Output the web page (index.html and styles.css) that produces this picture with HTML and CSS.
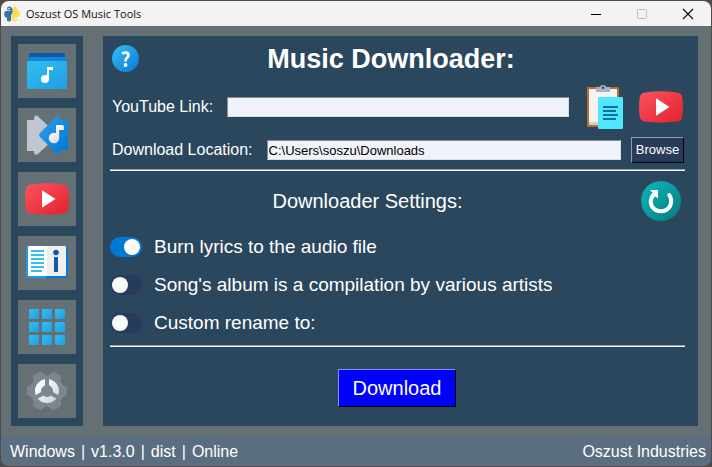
FILE: index.html
```html
<!DOCTYPE html>
<html lang="en">
<head>
<meta charset="utf-8">
<title>Oszust OS Music Tools</title>
<link rel="stylesheet" href="styles.css">
</head>
<body>
<svg class="defs" width="0" height="0" aria-hidden="true">
  <defs>
    <linearGradient id="blue" x1="0" y1="0" x2="1" y2="1"><stop offset="0" stop-color="#36c0f4"/><stop offset="1" stop-color="#0a78d6"/></linearGradient>
    <linearGradient id="sky" x1="0" y1="0" x2="1" y2="1"><stop offset="0" stop-color="#33bef0"/><stop offset="1" stop-color="#1f9fe5"/></linearGradient>
    <linearGradient id="azure" x1="0" y1="0" x2="1" y2="1"><stop offset="0" stop-color="#2f9fe8"/><stop offset="1" stop-color="#0078d8"/></linearGradient>
    <linearGradient id="red" x1="0" y1="0" x2="1" y2="1"><stop offset="0" stop-color="#f9555f"/><stop offset="1" stop-color="#e4202e"/></linearGradient>
    <linearGradient id="teal" x1="0" y1="0" x2="1" y2="1"><stop offset="0" stop-color="#0cb8bc"/><stop offset="1" stop-color="#037b80"/></linearGradient>
    <linearGradient id="silver" x1="0" y1="0" x2="1" y2="1"><stop offset="0" stop-color="#ffffff"/><stop offset="1" stop-color="#d3d6da"/></linearGradient>
    <symbol id="play" viewBox="0 0 44 32">
      <path d="M6 1.5Q22-.8 38 1.5Q43 2 43.3 7Q44.6 16 43.3 25Q43 30 38 30.5Q22 32.8 6 30.5Q1 30 .7 25Q-.6 16 .7 7Q1 2 6 1.5Z" fill="url(#red)"/>
      <path d="M17 7.2V24.8L30.5 16Z" fill="#fff"/>
    </symbol>
  </defs>
</svg>
<div class="window">
  <header class="titlebar">
    <svg class="app-icon" width="16" height="16" viewBox="0 0 16 16" aria-hidden="true">
      <path d="M7.500 1.500C6 .2 4 .4 3.200 1.600V4.200H6.500V5H1.800C.3 5.500 0 7 .2 8.500C.4 10.500 1.200 11.600 3 11.600V14.500C4.500 15.800 6.200 15.600 7 14.500V9.500C7 8.500 7.500 8 8.500 7.500V3Z" fill="#3573a5"/>
      <path d="M8.500 14.500C10 15.800 12 15.600 12.800 14.400V11.800H9.500V11H14.200C15.700 10.500 16 9 15.800 7.500C15.600 5.500 14.800 4.400 13 4.400V1.500C11.500.2 9.800.4 9 1.500V6.500C9 7.500 8.500 8 7.500 8.500V13Z" fill="#ffdc4c"/>
      <circle cx="5" cy="2.600" r=".8" fill="#fff"/><circle cx="11" cy="13.400" r=".8" fill="#fff"/>
    </svg>
    <span class="app-title">Oszust OS Music Tools</span>
    <div class="window-controls">
      <button type="button" aria-label="Minimize"><svg width="12" height="12" viewBox="0 0 12 12"><path d="M1 6.500H11" stroke="#000"/></svg></button>
      <button type="button" aria-label="Maximize" disabled><svg width="12" height="12" viewBox="0 0 12 12"><rect x="1.500" y="1.500" width="9" height="9" rx="1" fill="none" stroke="#bfbfbf"/></svg></button>
      <button type="button" aria-label="Close"><svg width="12" height="12" viewBox="0 0 12 12"><path d="M1 1L11 11M11 1L1 11" stroke="#111" stroke-width="1.200"/></svg></button>
    </div>
  </header>

  <div class="workspace">
    <nav class="sidebar" aria-label="Tools">
      <button type="button" aria-label="Music library">
        <svg width="44" height="40" viewBox="0 0 44 40">
          <rect x="4" y="2" width="36" height="8" rx="1" fill="#105aa5"/>
          <rect x="3" y="6" width="38" height="8" rx="1" fill="#1186dc"/>
          <rect x="2" y="10" width="40" height="28" rx="1" fill="url(#sky)"/>
          <circle cx="20" cy="28" r="4" fill="#fff"/><path d="M22 28V16H28V19H24V28Z" fill="#fff"/>
        </svg>
      </button>
      <button type="button" aria-label="Metadata">
        <svg width="44" height="42" viewBox="0 0 44 42">
          <path d="M2 6H9V4Q10 .5 12 1.500L31 19Q32.500 21 31 23L13 40Q10 42 9 39V37H2Z" fill="#bec7d0"/>
          <path d="M14.500 22.500Q13.500 21 14.500 19.500L31 3Q34 1 35 3.500V6H43V36H35V38Q34 41 31 39Z" fill="url(#azure)"/>
          <circle cx="29" cy="24" r="5.200" fill="url(#silver)"/><path d="M31 24V12Q31 11 32 11H37Q39 11 39 13V16H34.200V24Z" fill="url(#silver)"/>
        </svg>
      </button>
      <button type="button" aria-label="YouTube"><svg width="44" height="32"><use href="#play"/></svg></button>
      <button type="button" aria-label="Information">
        <svg width="42" height="34" viewBox="0 0 42 34">
          <path d="M2 0H21V33H19L18 32H2Q0 32 0 30V2Q0 0 2 0Z" fill="#1a9ce4"/>
          <path d="M21 0H40Q42 0 42 2V30Q42 32 40 32H23L22 33H20V30Z" fill="#0879d4"/>
          <path d="M2 1Q2 0 3 0H21V30H3Q2 30 2 29Z" fill="#fff"/><path d="M21 0H39Q40 0 40 1V29Q40 30 39 30H21Z" fill="#efeff0"/>
          <path d="M5 5H18M5 9H18M5 13H18M5 17H18M5 21H18M5 25H16" stroke="#35bef2" stroke-width="2"/>
          <circle cx="30" cy="6.500" r="2.800" fill="#105aa5"/><path d="M28 11H32V26H28Z" fill="#105aa5"/>
        </svg>
      </button>
      <button type="button" aria-label="Apps">
        <svg width="36" height="36" viewBox="0 0 36 36" fill="url(#sky)">
          <rect width="10" height="10" rx="1"/><rect x="13" width="10" height="10" rx="1"/><rect x="26" width="10" height="10" rx="1"/>
          <rect y="13" width="10" height="10" rx="1"/><rect x="13" y="13" width="10" height="10" rx="1"/><rect x="26" y="13" width="10" height="10" rx="1"/>
          <rect y="26" width="10" height="10" rx="1"/><rect x="13" y="26" width="10" height="10" rx="1"/><rect x="26" y="26" width="10" height="10" rx="1"/>
        </svg>
      </button>
      <button type="button" aria-label="Settings">
        <svg width="40" height="40" viewBox="0 0 40 40">
          <path d="M13 1Q14 .4 15 1.600Q17.500 4.500 20 4.500T25 1.600Q26 .4 27 1Q31 2.500 33.500 4.500Q34.300 5.200 34 6.500Q33 10 34.400 12.300T39 15.500Q40 15.700 40 17V23Q40 24.300 39 24.500Q36 25.300 34.600 27.600T34 33.500Q34.300 34.800 33.500 35.500Q30.500 37.800 27 39Q26 39.600 25 38.400Q22.500 35.500 20 35.500T15 38.400Q14 39.600 13 39Q9.500 37.800 6.500 35.500Q5.700 34.800 6 33.500Q6.800 30 5.400 27.600T1 24.500Q0 24.300 0 23V17Q0 15.700 1 15.500Q4 14.700 5.500 12.300T6 6.500Q5.700 5.200 6.500 4.500Q9.500 2.200 13 1Z" fill="#7c8690"/>
          <circle cx="20" cy="20" r="9" fill="none" stroke="url(#silver)" stroke-width="6"/>
          <g stroke="#7c8690" stroke-width="4"><path d="M20 20V7"/><path d="M20 20L8.700 26.500"/><path d="M20 20L31.300 26.500"/></g>
        </svg>
      </button>
    </nav>

    <main class="panel">
      <div class="heading">
        <button type="button" class="icon-button" aria-label="Help">
          <svg width="27" height="27" viewBox="0 0 27 27"><circle cx="13.500" cy="13.500" r="13.500" fill="url(#blue)"/><path d="M10.200 8.700Q12 7.500 13.700 7.600Q16.500 7.800 16.500 10.100Q16.500 11.500 15 12.700Q13.500 13.800 13.500 16.500" fill="none" stroke="#fff" stroke-width="2.600"/><circle cx="13.500" cy="20" r="1.900" fill="#fff"/></svg>
        </button>
        <h1>Music Downloader:</h1>
      </div>

      <div class="field link-field">
        <label for="link">YouTube Link:</label>
        <input id="link" type="text">
        <button type="button" class="icon-button paste" aria-label="Paste link">
          <svg width="36" height="44" viewBox="0 0 36 44">
            <rect y="2" width="32" height="40" rx="1" fill="#b96b33"/><rect x="2" y="4" width="28" height="36" fill="#f3f3f4"/><path d="M2 37H12V40H2Z" fill="#cfd2d5"/>
            <path d="M9 2H13Q13 0 16 0T19 2H23V7H9Z" fill="#a9b3bd"/><circle cx="16" cy="2.800" r="1.300" fill="#35485a"/>
            <rect x="11" y="12" width="25" height="32" rx="1" fill="#50e6ff"/>
            <path d="M16 22H31M16 26H29M16 30H31M16 34H29" stroke="#087394" stroke-width="2"/>
          </svg>
        </button>
        <button type="button" class="icon-button open-site" aria-label="Open YouTube"><svg width="44" height="32"><use href="#play"/></svg></button>
      </div>

      <div class="field location-field">
        <label for="location">Download Location:</label>
        <input id="location" type="text" value="C:\Users\soszu\Downloads">
        <button type="button" class="browse">Browse</button>
      </div>
      <hr>

      <div class="settings-heading">
        <h2>Downloader Settings:</h2>
        <button type="button" class="icon-button" aria-label="Reset settings">
          <svg width="40" height="40" viewBox="0 0 40 40"><circle cx="20" cy="20" r="20" fill="url(#teal)"/><path d="M12 14Q8 20 11 25.500Q14.500 30.500 20.500 30.300Q26.500 30 29.300 24.500Q31.500 19 28.300 14" fill="none" stroke="#fff" stroke-width="4" stroke-linecap="round"/><path d="M9 9H17V17.500L14.500 15.500L12 17L9.500 15L12 12Z" fill="#fff"/></svg>
        </button>
      </div>

      <div class="options">
        <label><input type="checkbox" checked>Burn lyrics to the audio file</label>
        <label><input type="checkbox">Song's album is a compilation by various artists</label>
        <label><input type="checkbox">Custom rename to:</label>
      </div>
      <hr>
      <button type="button" class="download">Download</button>
    </main>
  </div>

  <footer class="statusbar">
    <div class="status"><span>Windows</span><span>|</span><span>v1.3.0</span><span>|</span><span>dist</span><span>|</span><span>Online</span></div>
    <span>Oszust Industries</span>
  </footer>
</div>
</body>
</html>
```

FILE: styles.css
```css
* { box-sizing: border-box; }

body {
  margin: 0;
  padding: 1px;
  min-height: 100vh;
  display: flex;
  background: #514b4e;
  color: #fff;
  font: 16px/20px "Liberation Sans", Arial, sans-serif;
}

button {
  margin: 0;
  padding: 0;
  border: 0;
  background: none;
  color: inherit;
  font: inherit;
}

svg { display: block; }
.defs { position: absolute; }

.window {
  flex: 1;
  display: flex;
  flex-direction: column;
  overflow: hidden;
  border-radius: 8px;
  background: #657075;
}

.titlebar {
  display: flex;
  align-items: stretch;
  height: 25px;
  padding-left: 3px;
  background: #f3f3f3;
  color: #111;
}

.app-icon { align-self: center; }

.app-title {
  flex: 1;
  margin-left: 6px;
  font: 11px/25px "Open Sans", "Noto Sans", sans-serif;
}

.window-controls { display: flex; }

.window-controls button {
  width: 46px;
  display: grid;
  place-items: center;
}

.workspace {
  flex: 1;
  display: flex;
  gap: 20px;
  padding: 10px 13px 10px 10px;
}

.sidebar {
  display: flex;
  flex-direction: column;
  gap: 10px;
  padding: 8px 7px;
  background: #2b475d;
}

.sidebar button {
  width: 58px;
  height: 54px;
  display: grid;
  place-items: center;
  background: #657075;
}

.panel {
  flex: 1;
  display: flex;
  flex-direction: column;
  padding: 9px 13px 19px 7px;
  background: #2b475d;
}

.heading {
  display: flex;
  align-items: center;
  height: 27px;
  padding: 0 42px 0 2px;
}

h1, h2 {
  flex: 1;
  margin: 0;
  text-align: center;
}

h1 { font-size: 27px; line-height: 28px; }
h2 { font-size: 20px; line-height: 24px; font-weight: normal; }

.field {
  display: flex;
  align-items: center;
  padding-left: 2px;
}

.link-field { margin-top: 13px; padding-right: 2px; }
.location-field { margin-top: 8px; padding-right: 1px; }

.field input {
  flex: 1;
  min-width: 0;
  height: 20px;
  margin-left: 14px;
  padding: 0 1px;
  border: 1px solid;
  border-color: #848b92 #d9dde2 #d9dde2 #848b92;
  background: #f0f3f9;
  color: #000;
  font: 13px/18px "Liberation Sans", Arial, sans-serif;
}

.paste { margin-left: 18px; }
.open-site { margin-left: 16px; }

.browse {
  width: 53px;
  height: 26px;
  margin-left: 10px;
  border: 1px solid;
  border-color: #939cad #000 #000 #939cad;
  background: #283b5b;
  font-size: 13px;
}

hr {
  width: 100%;
  height: 2px;
  margin: 6px 0 0;
  border: 0;
  border-top: 1px solid #a0a0a0;
  background: #f0f0f0;
}

.settings-heading {
  display: flex;
  align-items: center;
  gap: 16px;
  margin-top: 10px;
  padding-right: 4px;
}

.options {
  display: grid;
  gap: 18px;
  margin: 16px 0 6px;
  font-size: 19px;
}

.options label {
  display: flex;
  align-items: center;
  gap: 12px;
}

.options input {
  appearance: none;
  width: 32px;
  height: 20px;
  margin: 0;
  padding: 2px;
  display: flex;
  border-radius: 10px;
  background: #283b5b;
}

.options input::before {
  content: "";
  width: 16px;
  height: 16px;
  border-radius: 50%;
  background: #fafafa;
}

.options input:checked {
  justify-content: flex-end;
  background: #0078d4;
}

.download {
  align-self: center;
  width: 118px;
  height: 38px;
  margin: 22px 1px 0 0;
  border: 1px solid;
  border-color: #8c8cff #000 #000 #8c8cff;
  background: #0000ff;
  font-size: 20px;
}

.statusbar {
  display: flex;
  align-items: center;
  justify-content: space-between;
  height: 30px;
  padding: 2px 5px 0 9px;
  background: #5a6e80;
}

.status { display: flex; gap: 6px; }
```
